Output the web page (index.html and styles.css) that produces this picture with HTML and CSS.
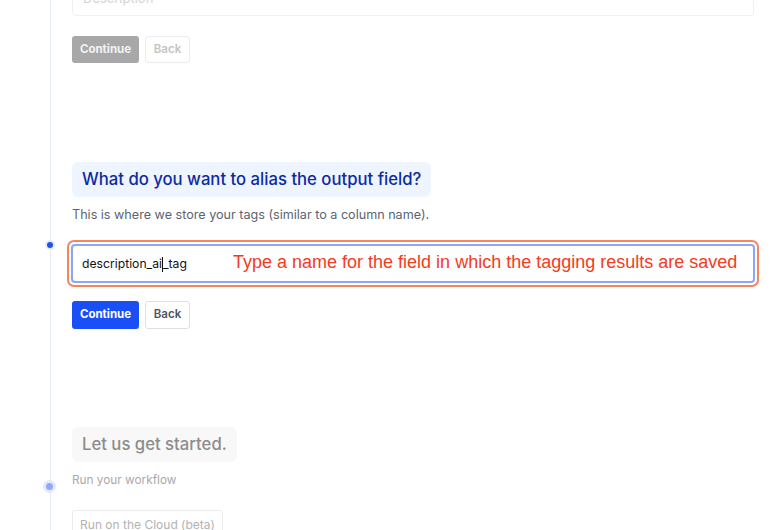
FILE: index.html
```html
<!DOCTYPE html>
<html>
<head>
<meta charset="utf-8">
<link rel="stylesheet" href="styles.css">
</head>
<body>
<div class="timeline">
  <section class="step step-done">
    <div class="field-box"><span class="placeholder">Description</span></div>
    <div class="actions">
      <button class="btn btn-primary is-disabled">Continue</button>
      <button class="btn btn-secondary is-disabled">Back</button>
    </div>
  </section>

  <section class="step step-active">
    <span class="dot dot-active"></span>
    <h2 class="title title-active">What do you want to alias the output field?</h2>
    <p class="hint">This is where we store your tags (similar to a column name).</p>
    <div class="highlight">
      <div class="input"><span class="value">description_ai</span><span class="caret"></span><span class="value">_tag</span></div>
      <span class="note">Type a name for the field in which the tagging results are saved</span>
    </div>
    <div class="actions">
      <button class="btn btn-primary">Continue</button>
      <button class="btn btn-secondary">Back</button>
    </div>
  </section>

  <section class="step step-next">
    <span class="dot dot-next"></span>
    <h2 class="title title-next">Let us get started.</h2>
    <p class="hint hint-next">Run your workflow</p>
    <div class="actions actions-next">
      <button class="btn btn-ghost">Run on the Cloud (beta)</button>
    </div>
  </section>
</div>
</body>
</html>
```
FILE: styles.css
```css
html, body {
  margin: 0;
  padding: 0;
  background: #ffffff;
  overflow: hidden;
  height: 530px;
}
body {
  font-family: Inter, "Noto Sans", sans-serif;
  color: #111;
}
.timeline {
  margin-left: 50px;
  border-left: 1px solid #e4ecfb;
  padding-left: 21px;
  width: 682px;
  margin-top: -20px;
  min-height: 600px;
}
.step {
  position: relative;
}
.field-box {
  height: 34px;
  border: 1px solid #f0f0f0;
  border-radius: 4px;
  display: flex;
  align-items: center;
  padding-left: 10px;
}
.placeholder {
  color: #d4d4d4;
  font-size: 13px;
}
.actions {
  display: flex;
  gap: 6px;
  margin-top: 20px;
}
.btn {
  font-family: Inter, "Noto Sans", sans-serif;
  font-size: 11.5px;
  font-weight: 600;
  height: 27px;
  padding: 0 10px;
  border-radius: 3px;
  border: 1px solid transparent;
  line-height: 1;
}
.btn-primary {
  background: #1a4ff6;
  color: #ffffff;
  width: 67px;
  padding: 0;
  font-weight: 700;
}
.btn-secondary {
  background: #fff;
  border-color: #dde1e6;
  color: #4b5563;
  width: 45px;
  padding: 0;
}
.btn-primary.is-disabled {
  background: #a8a8a8;
  color: #f2f2f2;
}
.btn-secondary.is-disabled {
  border-color: #ececec;
  color: #c4c4c4;
}
.step-active {
  margin-top: 99px;
}
.title {
  display: inline-block;
  margin: 0;
  font-size: 16.7px;
  font-weight: 500;
  line-height: 19px;
  padding: 8px 10px;
  border-radius: 6px;
}
.title-active {
  background: #eef5ff;
  color: #0d2ba0;
}
.hint {
  margin: 10px 0 0;
  font-size: 12.6px;
  line-height: 16px;
  color: #5b6472;
}
.dot {
  position: absolute;
  left: -25px;
  border-radius: 50%;
}
.dot-active {
  top: 80px;
  width: 6px;
  height: 6px;
  left: -25px;
  background: #2251f0;
  box-shadow: 0 0 0 2px #e4ebfd;
}
.highlight {
  position: relative;
  margin: 17px -5px 0 -5px;
  border: 2px solid #f8845c;
  border-radius: 7px;
  padding: 2px;
}
.input {
  height: 35px;
  border: 2px solid #8ea6f7;
  border-radius: 4px;
  display: flex;
  align-items: center;
  padding-left: 9px;
  background: #fff;
}
.value {
  font-size: 12.2px;
  color: #111;
}
.caret {
  display: inline-block;
  width: 1px;
  height: 15px;
  background: #111;
  margin-top: 1px;
}
.note {
  position: absolute;
  left: 164px;
  top: 10px;
  font-family: "Liberation Sans", Arial, sans-serif;
  font-size: 18px;
  color: #f43b22;
  white-space: nowrap;
}
.step-active .actions {
  margin-top: 14px;
}
.step-active .btn {
  height: 28px;
}
.step-next {
  margin-top: 98px;
}
.title-next {
  background: #f8f8f8;
  color: #8c8c8c;
}
.hint-next {
  color: #a9a9a9;
  font-size: 11.8px;
}
.dot-next {
  top: 56px;
  width: 7px;
  height: 7px;
  left: -26px;
  background: #93a7f6;
  box-shadow: 0 0 0 3px #e2e9fd;
}
.actions-next {
  margin-top: 22px;
}
.btn-ghost {
  background: #fff;
  border-color: #ececec;
  color: #b3b3b3;
  font-weight: 400;
  font-size: 12px;
  width: 151px;
  height: 30px;
  padding: 0;
}
```
